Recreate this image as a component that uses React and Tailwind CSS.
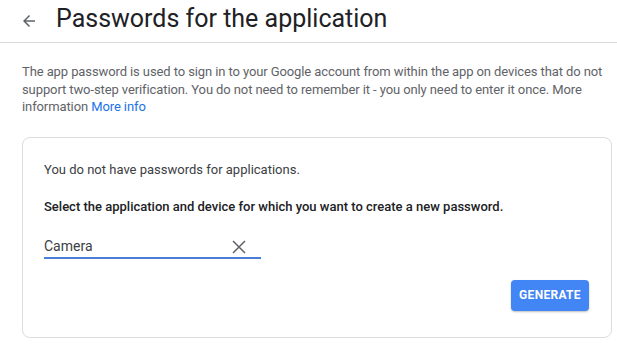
import React, { useState } from "react";

function App() {
  const [app, setApp] = useState("Camera");

  return (
    <div className="min-h-screen bg-white font-['Roboto',sans-serif]">
      <header className="flex items-center h-[43px] border-b border-[#dadce0]">
        <button className="ml-[20px] w-[18px] h-[18px] flex items-center justify-center text-[#5f6368]">
          <svg width="18" height="18" viewBox="0 0 24 24" fill="currentColor">
            <path d="M20 11H7.83l5.59-5.59L12 4l-8 8 8 8 1.41-1.41L7.83 13H20v-2z" />
          </svg>
        </button>
        <h1 className="ml-[18px] text-[25px] leading-none text-[#202124] pb-[6px]">
          Passwords for the application
        </h1>
      </header>

      <div className="pl-[22px] pr-[5px] pt-[20px]">
        <p className="text-[13px] leading-[17.5px] text-[#5f6368] tracking-[-0.1px] whitespace-nowrap">
          The app password is used to sign in to your Google account from within the app on devices that do not
          <br />
          support two-step verification. You do not need to remember it - you only need to enter it once. More
          <br />
          information <a href="#" className="text-[#1a73e8]">More info</a>
        </p>

        <div className="mt-[21px] border border-[#dadce0] rounded-[8px] h-[201px] px-[21px] pt-[22px]">
          <p className="text-[13px] text-[#3c4043]">You do not have passwords for applications.</p>
          <p className="mt-[18px] text-[13px] font-medium text-[#202124]">
            Select the application and device for which you want to create a new password.
          </p>
          <div className="mt-[20px] w-[217px] flex items-center border-b-2 border-[#4a7fd8] h-[22px]">
            <input
              value={app}
              onChange={(e) => setApp(e.target.value)}
              className="flex-1 outline-none text-[14px] text-[#3c4043] bg-transparent"
            />
            <button onClick={() => setApp("")} className="mr-[15px] text-[#5f6368]">
              <svg width="14" height="14" viewBox="0 0 14 14" fill="none" stroke="currentColor" strokeWidth="1.5">
                <path d="M1 1L13 13M13 1L1 13" />
              </svg>
            </button>
          </div>
          <div className="flex justify-end mt-[21px] pr-[1px]">
            <button className="bg-[#4285f4] text-white text-[12px] font-bold tracking-[0.3px] rounded-[4px] w-[78px] h-[31px] shadow-[0_1px_2px_rgba(0,0,0,0.25)]">
              GENERATE
            </button>
          </div>
        </div>
      </div>
    </div>
  );
}

export default App;
